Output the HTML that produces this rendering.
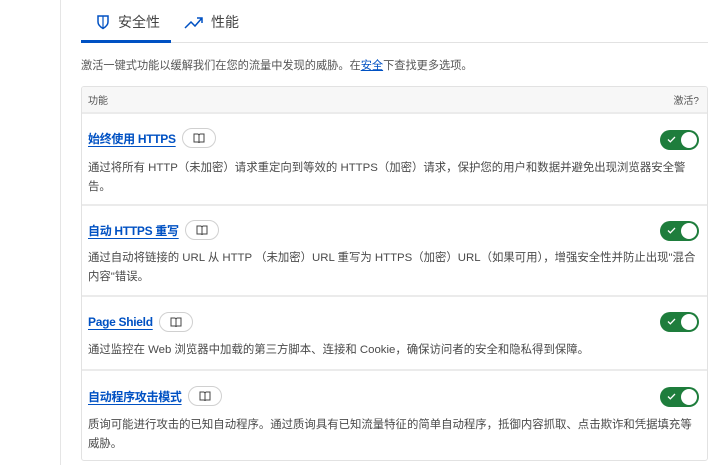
<!DOCTYPE html>
<html><head><meta charset="utf-8"><style>
*{margin:0;padding:0;box-sizing:border-box}
body{width:720px;height:465px;background:#fff;font-family:"Liberation Sans","Noto Sans CJK SC",sans-serif;color:#313131;position:relative;overflow:hidden}
.side{position:absolute;left:60px;top:0;width:1px;height:465px;background:#e5e5e5}
.tabs{position:absolute;left:81px;top:0;width:627px;height:43px;border-bottom:1px solid #e2e2e2}
.tab{position:absolute;top:12px;font-size:14px;color:#444;display:flex;align-items:center;gap:7px}
.ul{position:absolute;left:81px;top:40px;width:90px;height:3px;background:#0051c3}
.intro{position:absolute;left:81px;top:57px;font-size:11.2px;color:#555}
.intro a{color:#0051c3;text-decoration:underline}
.card{position:absolute;left:81px;top:86px;width:627px;height:375px;border:1px solid #e2e2e2;border-radius:3px;overflow:hidden}
.hdr{height:27px;background:#f7f7f7;border-bottom:2px solid #ebebeb;font-size:10px;color:#555;display:flex;justify-content:space-between;align-items:center;padding:0 8px 0 6px}
.row{position:relative;border-bottom:2px solid #ebebeb;padding:0 6px}
.row:last-child{border-bottom:none}
.t{position:absolute;left:6px;display:flex;align-items:center;gap:6px}
.t a{color:#0051c3;font-weight:bold;font-size:12px;letter-spacing:-0.3px;text-decoration:underline;text-underline-offset:3px}
.pill{width:34px;height:20px;border:1px solid #d0d0d0;border-radius:10px;display:flex;align-items:center;justify-content:center}
.d{position:absolute;left:6px;right:8px;font-size:11.4px;line-height:19px;color:#4a4a4a}
.tg{position:absolute;right:8px;width:39px;height:20px;border-radius:10px;background:#1e7d3c}
.tg:after{content:"";position:absolute;right:2px;top:2px;width:16px;height:16px;border-radius:50%;background:#fff}
.tg svg{position:absolute;left:7px;top:6px}
</style></head><body>
<div class="side"></div>
<div class="tabs">
<div class="tab" style="left:14px"><svg width="16" height="16" viewBox="0 0 16 16"><path d="M3 2h10v6c0 3-2.5 5-5 6.5C5.5 13 3 11 3 8z" fill="none" stroke="#0051c3" stroke-width="1.5"/><path d="M8 2v12" stroke="#0051c3" stroke-width="1.2"/></svg><span>安全性</span></div>
<div class="tab" style="left:103px"><svg width="20" height="14" viewBox="0 0 20 14"><path d="M1 13l6-6 4 4 7-8M13 3h5v5" fill="none" stroke="#0051c3" stroke-width="1.5"/></svg><span>性能</span></div>
</div>
<div class="ul"></div>
<div class="intro">激活一键式功能以缓解我们在您的流量中发现的威胁。在<a>安全</a>下查找更多选项。</div>
<div class="card">
<div class="hdr"><span>功能</span><span>激活?</span></div>
<div class="row" style="height:92px">
<div class="t" style="top:14px"><a>始终使用 HTTPS</a><span class="pill"><svg width="12" height="10" viewBox="0 0 12 10"><path d="M1 1h4l1 1 1-1h4v8H7L6 9.5 5 9H1z M6 2v7" fill="none" stroke="#444" stroke-width="1"/></svg></span></div>
<div class="tg" style="top:16px"><svg width="9" height="7" viewBox="0 0 9 7"><path d="M1 3.5l2.3 2.3L8 1" fill="none" stroke="#fff" stroke-width="1.3"/></svg></div>
<div class="d" style="top:45px">通过将所有 HTTP（未加密）请求重定向到等效的 HTTPS（加密）请求，保护您的用户和数据并避免出现浏览器安全警告。</div>
</div>
<div class="row" style="height:91px">
<div class="t" style="top:14px"><a>自动 HTTPS 重写</a><span class="pill"><svg width="12" height="10" viewBox="0 0 12 10"><path d="M1 1h4l1 1 1-1h4v8H7L6 9.5 5 9H1z M6 2v7" fill="none" stroke="#444" stroke-width="1"/></svg></span></div>
<div class="tg" style="top:15px"><svg width="9" height="7" viewBox="0 0 9 7"><path d="M1 3.5l2.3 2.3L8 1" fill="none" stroke="#fff" stroke-width="1.3"/></svg></div>
<div class="d" style="top:43px">通过自动将链接的 URL 从 HTTP （未加密）URL 重写为 HTTPS（加密）URL（如果可用），增强安全性并防止出现"混合内容"错误。</div>
</div>
<div class="row" style="height:74px">
<div class="t" style="top:15px"><a>Page Shield</a><span class="pill"><svg width="12" height="10" viewBox="0 0 12 10"><path d="M1 1h4l1 1 1-1h4v8H7L6 9.5 5 9H1z M6 2v7" fill="none" stroke="#444" stroke-width="1"/></svg></span></div>
<div class="tg" style="top:15px"><svg width="9" height="7" viewBox="0 0 9 7"><path d="M1 3.5l2.3 2.3L8 1" fill="none" stroke="#fff" stroke-width="1.3"/></svg></div>
<div class="d" style="top:44px">通过监控在 Web 浏览器中加载的第三方脚本、连接和 Cookie，确保访问者的安全和隐私得到保障。</div>
</div>
<div class="row" style="height:90px">
<div class="t" style="top:15px"><a>自动程序攻击模式</a><span class="pill"><svg width="12" height="10" viewBox="0 0 12 10"><path d="M1 1h4l1 1 1-1h4v8H7L6 9.5 5 9H1z M6 2v7" fill="none" stroke="#444" stroke-width="1"/></svg></span></div>
<div class="tg" style="top:16px"><svg width="9" height="7" viewBox="0 0 9 7"><path d="M1 3.5l2.3 2.3L8 1" fill="none" stroke="#fff" stroke-width="1.3"/></svg></div>
<div class="d" style="top:45px">质询可能进行攻击的已知自动程序。通过质询具有已知流量特征的简单自动程序，抵御内容抓取、点击欺诈和凭据填充等威胁。</div>
</div>
</div>
</body></html>
